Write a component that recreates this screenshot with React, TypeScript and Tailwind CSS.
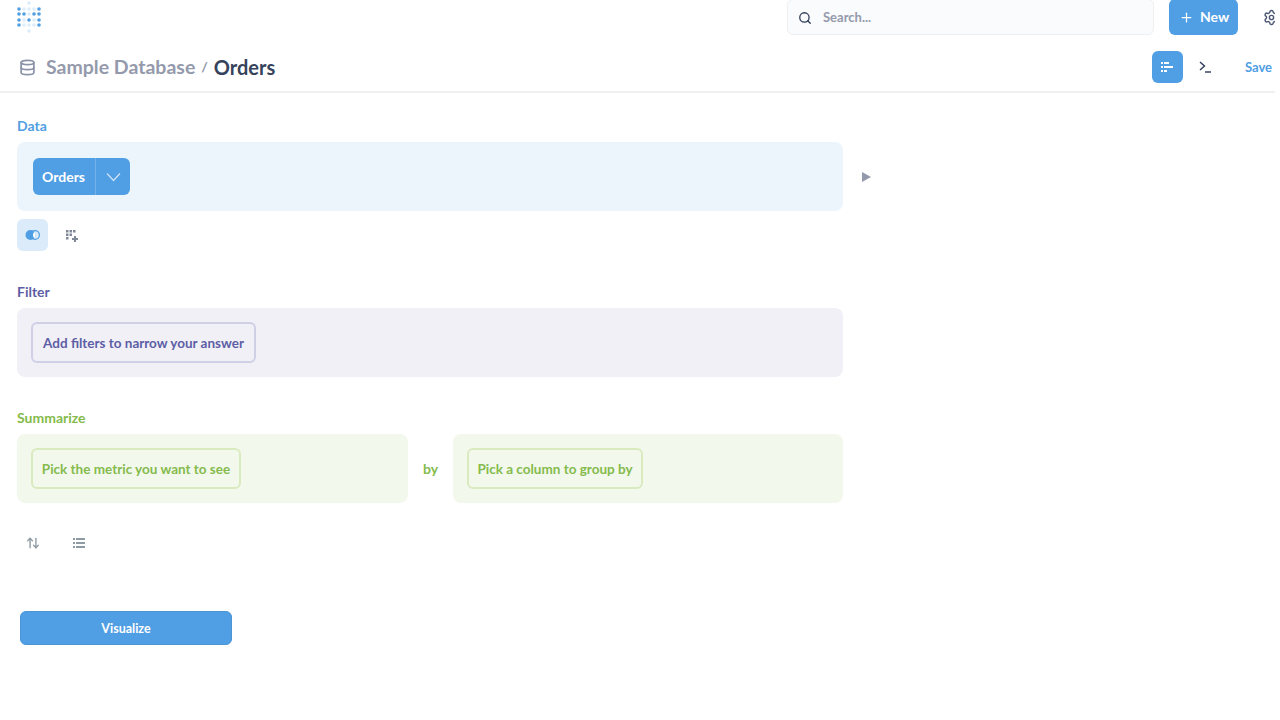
import { Plus, Search, Settings, Database, ArrowUpDown } from "lucide-react";

const dots: [number, number, number][] = [
  [29, 3, 0.2],
  [19, 9, 1], [24, 9, 0.2], [29, 9, 0.2], [34, 9, 0.2], [39, 9, 1],
  [19, 14, 1], [24, 14, 1], [29, 14, 0.2], [34, 14, 1], [39, 14, 1],
  [19, 20, 1], [24, 20, 0.2], [29, 20, 1], [34, 20, 0.2], [39, 20, 1],
  [19, 25, 1], [24, 25, 0.2], [29, 25, 0.2], [34, 25, 0.2], [39, 25, 1],
  [29, 31, 0.2],
];

const Logo = () => (
  <svg width="30" height="35" viewBox="15 0 30 35" className="block">
    {dots.map(([x, y, o], i) => (
      <circle key={i} cx={x} cy={y} r="1.8" fill="#509ee3" opacity={o} />
    ))}
  </svg>
);

const App = () => {
  return (
    <div className="w-[1275px] h-[720px] overflow-hidden bg-white font-['Lato',sans-serif]">
      <header className="h-[35px] flex items-end pl-[15px]">
        <div className="self-start shrink-0">
          <Logo />
        </div>
        <div className="shrink-0 ml-[742px] w-[367px] h-[36px] flex items-center rounded-md border border-[#eeeff1] bg-[#f9fbfc] pl-[10px] pt-[1px]">
          <Search size={14} strokeWidth={2.2} className="text-[#2e3a59]" />
          <span className="ml-[11px] text-[13px] font-bold text-[#949aab]">Search...</span>
        </div>
        <button className="shrink-0 ml-[15px] w-[69px] h-[36px] flex items-center rounded-md bg-[#509ee3] pl-[10px] text-white">
          <Plus size={15} strokeWidth={2} />
          <span className="ml-[6px] text-sm font-bold">New</span>
        </button>
        <div className="shrink-0 ml-[25px] h-[35px] flex items-center">
          <Settings size={17} strokeWidth={2} className="text-[#4c5773]" />
        </div>
      </header>

      <div className="h-[58px] flex items-center border-b-2 border-[#f0f0f0] pt-[8px] pl-[19px] pr-[3px]">
        <Database size={17} strokeWidth={2.4} className="text-[#8b93a8]" />
        <span className="ml-[10px] text-[19.5px] font-bold text-[#949aab]">Sample Database</span>
        <span className="ml-[6px] text-sm font-bold text-[#949aab]">/</span>
        <span className="ml-[6px] text-xl font-bold text-[#36435c]">Orders</span>
        <button className="ml-auto w-[31px] h-[32px] flex items-center justify-center rounded-md bg-[#509ee3]">
          <svg width="14" height="12" viewBox="0 0 14 12" fill="#fff">
            <rect x="1" y="1" width="2" height="2" />
            <rect x="4" y="1" width="5" height="2" />
            <rect x="1" y="5" width="2" height="2" />
            <rect x="4" y="5" width="9" height="2" />
            <rect x="1" y="9" width="2" height="2" />
            <rect x="4" y="9" width="3" height="2" />
          </svg>
        </button>
        <svg width="14" height="12" viewBox="0 0 14 12" className="ml-[16px]" fill="none" stroke="#2e3a59" strokeWidth="1.4">
          <path d="M1 1l4.5 4L1 9" />
          <path d="M6 11h6" />
        </svg>
        <span className="ml-[32px] pt-[2px] text-[13px] font-bold text-[#509ee3]">Save</span>
      </div>

      <main className="pl-[17px] pt-[24px]">
        <div className="text-sm font-bold leading-[18px] text-[#509ee3]">Data</div>
        <div className="mt-[7px] flex items-center">
          <div className="w-[826px] h-[69px] flex items-center rounded-lg bg-[#edf5fc] pl-[16px]">
            <div className="h-[37px] flex items-center rounded-md bg-[#509ee3] text-white">
              <span className="w-[62px] pl-[9px] text-sm font-bold">Orders</span>
              <div className="w-[35px] h-full flex items-center justify-center border-l border-[#74b1e9]">
                <svg width="15" height="10" viewBox="0 0 15 10" fill="none" stroke="#cfe3f7" strokeWidth="1.2">
                  <path d="M1 1.5l6.5 7 6.5-7" />
                </svg>
              </div>
            </div>
          </div>
          <div className="ml-[19px] w-0 h-0 border-y-[5px] border-y-transparent border-l-[9px] border-l-[#949aab]" />
        </div>
        <div className="mt-[8px] flex items-center">
          <div className="w-[31px] h-[32px] flex items-center justify-center rounded-md bg-[#dcebf9]">
            <svg width="15" height="12" viewBox="0 0 15 12" fill="none">
              <defs>
                <clipPath id="venn-left">
                  <circle cx="5.5" cy="6" r="5" />
                </clipPath>
              </defs>
              <circle cx="5.5" cy="6" r="5" fill="#509ee3" />
              <circle cx="12.5" cy="6" r="4.5" fill="#ffffff" clipPath="url(#venn-left)" />
              <circle cx="10" cy="6" r="4.4" stroke="#509ee3" strokeWidth="1.2" />
            </svg>
          </div>
          <svg width="14" height="14" viewBox="0 0 14 14" className="ml-[17px] mt-[1px]" fill="#7f8799">
            <rect x="1" y="1" width="2.5" height="2.5" />
            <rect x="4.5" y="1" width="2.5" height="2.5" />
            <rect x="8" y="1" width="2.5" height="2.5" />
            <rect x="1" y="4.5" width="2.5" height="2.5" />
            <rect x="4.5" y="4.5" width="2.5" height="2.5" />
            <rect x="1" y="8" width="2.5" height="2.5" />
            <path d="M9 7h2v2h2v2h-2v2H9v-2H7V9h2z" />
          </svg>
        </div>

        <div className="mt-[32px] text-sm font-bold leading-[18px] text-[#5d5ea5]">Filter</div>
        <div className="mt-[7px] w-[826px] h-[69px] flex items-center rounded-lg bg-[#f1f0f7] pl-[14px]">
          <button className="h-[41px] w-[225px] pt-[1px] rounded-md border-2 border-[#cfcfe6] text-[13.5px] font-bold text-[#5d5ea5]">
            Add filters to narrow your answer
          </button>
        </div>

        <div className="mt-[32px] text-sm font-bold leading-[18px] text-[#84bb4c]">Summarize</div>
        <div className="mt-[7px] flex items-center">
          <div className="w-[391px] h-[69px] flex items-center rounded-lg bg-[#f3f8ed] pl-[14px]">
            <button className="h-[41px] w-[210px] pt-[1px] rounded-md border-2 border-[#daeabf] text-[13.5px] font-bold text-[#84bb4c]">
              Pick the metric you want to see
            </button>
          </div>
          <span className="w-[45px] text-center text-sm font-bold text-[#84bb4c]">by</span>
          <div className="w-[390px] h-[69px] flex items-center rounded-lg bg-[#f3f8ed] pl-[14px]">
            <button className="h-[41px] w-[176px] pt-[1px] rounded-md border-2 border-[#daeabf] text-[13.5px] font-bold text-[#84bb4c]">
              Pick a column to group by
            </button>
          </div>
        </div>

        <div className="mt-[33px] flex items-center pl-[9px]">
          <ArrowUpDown size={14} strokeWidth={2.4} className="text-[#8f9ba3]" />
          <svg width="14" height="12" viewBox="0 0 14 12" className="ml-[32px]" fill="#8f9ba3">
            <rect x="1" y="1" width="2" height="2" />
            <rect x="4" y="1" width="9" height="2" />
            <rect x="1" y="5" width="2" height="2" />
            <rect x="4" y="5" width="9" height="2" />
            <rect x="1" y="9" width="2" height="2" />
            <rect x="4" y="9" width="9" height="2" />
          </svg>
        </div>

        <button className="mt-[61px] ml-[3px] w-[212px] h-[34px] pt-[2px] rounded-md border border-[#4b94d6] bg-[#509ee3] text-[12.5px] font-bold text-white">
          Visualize
        </button>
      </main>
    </div>
  );
};

export default App;
